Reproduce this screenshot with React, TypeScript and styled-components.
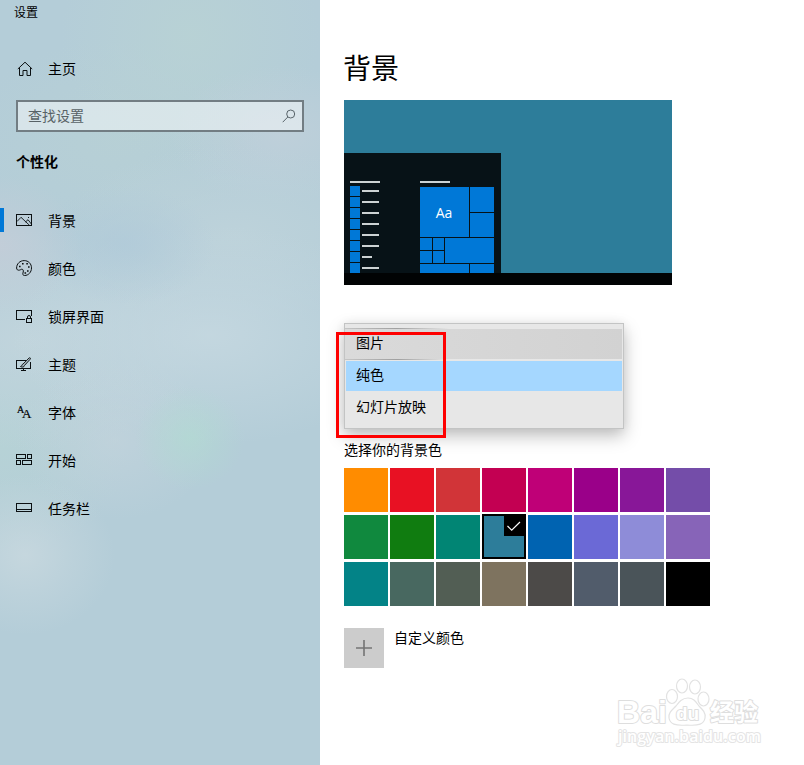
import React from "react";
import styled, { createGlobalStyle, css } from "styled-components";

const GlobalStyle = createGlobalStyle`
  *, *::before, *::after { box-sizing: border-box; }
  body {
    margin: 0;
    background: #fff;
    color: #000;
    font: 14px/20px "Noto Sans CJK SC", "Noto Sans", sans-serif;
    overflow: hidden;
  }
  svg { display: block; }
`;

const Window = styled.div`
  position: relative;
  display: flex;
  width: 804px;
  height: 765px;
  overflow: hidden;
`;

const Sidebar = styled.aside`
  width: 320px;
  flex: none;
  display: flex;
  flex-direction: column;
  background:
    radial-gradient(ellipse 55px 52px at 190px 438px, rgba(178, 219, 210, 0.7), rgba(178, 219, 210, 0.35) 50%, transparent),
    radial-gradient(ellipse 90px 80px at 25px 555px, rgba(203, 218, 224, 0.75), rgba(203, 218, 224, 0.35) 50%, transparent),
    radial-gradient(ellipse 100px 80px at 115px 440px, rgba(200, 214, 222, 0.55), transparent),
    radial-gradient(ellipse 80px 70px at 0 245px, rgba(198, 205, 216, 0.75), transparent),
    radial-gradient(ellipse 90px 60px at 125px 245px, rgba(176, 202, 217, 0.75), transparent),
    radial-gradient(ellipse 200px 110px at 210px 335px, rgba(199, 217, 225, 0.8), transparent),
    radial-gradient(ellipse 180px 90px at 235px 235px, rgba(192, 212, 219, 0.75), transparent),
    radial-gradient(ellipse 180px 110px at 30px 340px, rgba(197, 215, 222, 0.75), transparent),
    radial-gradient(ellipse 110px 70px at 280px 135px, rgba(197, 209, 219, 0.6), transparent),
    radial-gradient(ellipse 130px 130px at 190px 35px, rgba(185, 211, 212, 0.75), transparent),
    radial-gradient(ellipse 150px 100px at 115px 140px, rgba(184, 209, 212, 0.65), transparent),
    radial-gradient(ellipse 130px 110px at 0 445px, rgba(183, 212, 213, 0.7), transparent),
    #b4cdd8;
`;

const WindowTitle = styled.div`
  height: 45px;
  padding: 3px 14px;
  font-size: 12px;
  line-height: 18px;
`;

const HomeLink = styled.div`
  height: 48px;
  padding-left: 17px;
  display: flex;
  align-items: center;
  gap: 15px;
`;

const HomeLabel = styled.span`
  padding-bottom: 2px;
`;

const SearchBox = styled.div`
  height: 32px;
  margin: 7px 16px 0;
  padding: 0 6px 0 10px;
  border: 2px solid #727d83;
  background: rgba(255, 255, 255, 0.46);
  display: flex;
  align-items: center;
  justify-content: space-between;
  color: #586266;
`;

const Placeholder = styled.span`
  padding-bottom: 3px;
`;

const SectionTitle = styled.div`
  height: 64px;
  padding: 19px 16px 0;
  font-weight: 700;
`;

const NavItem = styled.div<{ $active?: boolean }>`
  height: 48px;
  display: flex;
  align-items: center;
  gap: 16px;
  padding-left: 12px;
  border-left: 4px solid transparent;
  ${(p) =>
    p.$active &&
    css`
      border-image: linear-gradient(transparent 12px, #0078d7 12px, #0078d7 36px, transparent 36px) 0 0 0 4;
    `}
`;

const NavIcon = styled.svg`
  width: 16px;
  height: 16px;
  fill: none;
  stroke: #0b1012;
  overflow: visible;
`;

const IconLetter = styled.text<{ $size: number }>`
  font: ${(p) => p.$size}px "Liberation Serif", serif;
  fill: #000;
  stroke: #000;
  stroke-width: 0.2;
`;

const NavLabel = styled.span`
  padding-bottom: 1px;
`;

const Main = styled.main`
  flex: 1;
  padding: 47px 24px 0;
  display: flex;
  flex-direction: column;
  align-items: flex-start;
`;

const Heading = styled.h1`
  margin: 0 0 13px -1px;
  font-size: 28px;
  line-height: 40px;
  font-weight: 400;
`;

const Preview = styled.div`
  width: 328px;
  height: 185px;
  display: flex;
  flex-direction: column;
  justify-content: flex-end;
  background: #2d7d9a;
`;

const StartMenu = styled.div`
  width: 157px;
  height: 120px;
  padding: 28px 7px 0 6px;
  display: flex;
  justify-content: space-between;
  background: #071217;
  overflow: hidden;
`;

const Taskbar = styled.div`
  height: 12px;
  background: #010304;
`;

const Bar = styled.div<{ $w: number }>`
  width: ${(p) => p.$w}px;
  height: 2px;
  background: #ccd2d3;
`;

const AppList = styled.div`
  display: flex;
  flex-direction: column;
  gap: 1px;
  & > ${Bar} { margin-bottom: 2px; }
`;

const AppEntry = styled.div`
  height: 10px;
  display: flex;
  gap: 2px;
  align-items: flex-start;
  ${Bar} { margin-top: 4px; }
`;

const AppTile = styled.div`
  width: 10px;
  height: 10px;
  background: #0078d7;
`;

const TileArea = styled.div`
  width: 74px;
`;

const TileGrid = styled.div`
  margin-top: 4px;
  display: grid;
  grid-template-columns: 12px 11px 24px 24px;
  grid-template-rows: 25px 24px 12px 12px 9px;
  gap: 1px;
`;

const Tile = styled.div<{ $area: string }>`
  grid-area: ${(p) => p.$area};
  background: #0078d7;
  color: #fff;
  display: flex;
  align-items: center;
  justify-content: center;
  font: 14px/20px "Open Sans", sans-serif;
  padding: 1px 1px 0 0;
`;

const SelectArea = styled.div`
  position: relative;
  margin-top: 38px;
  height: 106px;
`;

const Menu = styled.div`
  width: 280px;
  height: 106px;
  padding: 5px 1px;
  display: flex;
  flex-direction: column;
  gap: 2px;
  border: 1px solid #c3c4c4;
  background: #e7e7e7;
  box-shadow: 0 7px 16px rgba(0, 0, 0, 0.25), 0 0 10px rgba(0, 0, 0, 0.06);
`;

const MenuItem = styled.div<{ $state?: "hover" | "selected" }>`
  height: 30px;
  padding-left: 10px;
  line-height: 26px;
  ${(p) =>
    p.$state === "hover" &&
    css`
      background: linear-gradient(90deg, #dadada, #d2d2d2);
      box-shadow: -1px 0 #dadada;
      &::before, &::after {
        content: "";
        display: block;
        width: 104px;
        height: 1px;
        margin: -1px 0 0 -11px;
        background: linear-gradient(90deg, #c5c5c5, #a0a0a0 50%, transparent);
      }
      &::after { margin-top: 4px; }
    `}
  ${(p) => p.$state === "selected" && css`background: #a5d7ff;`}
`;

const Highlight = styled.div`
  position: absolute;
  left: -8px;
  top: 9px;
  width: 110px;
  height: 106px;
  border: 3px solid #fe0000;
`;

const FieldLabel = styled.div`
  position: relative;
  margin: 10px 0 9px;
`;

const Palette = styled.div`
  display: grid;
  grid-template-columns: repeat(8, 44px);
  grid-auto-rows: 44px;
  gap: 3px 2px;
`;

const Swatch = styled.div<{ $color: string; $selected?: boolean }>`
  background: ${(p) => p.$color};
  ${(p) =>
    p.$selected &&
    css`
      margin-top: -1px;
      border: 2px solid #000;
      display: flex;
      justify-content: flex-end;
      align-items: flex-start;
    `}
`;

const CheckBadge = styled.svg`
  width: 20px;
  height: 20px;
  background: #000;
  fill: none;
  stroke: #fff;
  stroke-width: 1.2;
`;

const CustomColor = styled.div`
  margin-top: 22px;
  display: flex;
  gap: 10px;
`;

const AddButton = styled.div`
  width: 40px;
  height: 40px;
  background: #ccc;
  svg { stroke: #747474; stroke-width: 1.6; }
`;

const CustomLabel = styled.span`
  line-height: 18px;
`;

const Watermark = styled.svg`
  position: absolute;
  left: 610px;
  top: 672px;
  fill: #fff;
  stroke: #e2e2e2;
  stroke-width: 1.2;
`;

const WatermarkText = styled.text<{ $size: number }>`
  font: 700 ${(p) => p.$size}px "Liberation Sans", "Noto Sans CJK SC", sans-serif;
  paint-order: stroke;
  stroke: #dedede;
  stroke-width: 2;
  stroke-linejoin: round;
`;

const WatermarkUrl = styled(WatermarkText)`
  font-family: "Open Sans", sans-serif;
  font-weight: 600;
  stroke: #e4e4e4;
`;

const icons = {
  picture: (
    <NavIcon viewBox="0 0 16 16">
      <path d="M.5 2.500h15v11H.5z" shapeRendering="crispEdges" />
      <path d="M1 9.500l4-4.200 8.500 8M9.500 10l2.500-2.300 3.500 4.500" strokeWidth="0.9" />
      <path d="M12 5.500h1" />
    </NavIcon>
  ),
  palette: (
    <NavIcon viewBox="0 0 16 16">
      <path d="M.6 8C.6 3.8 3.9.6 8.2.6c4.100 0 7.300 3.100 7.300 7.300 0 4.300-3.100 7.600-6.900 7.600-1.500 0-2.100-1-1.700-2.300.5-1.600.8-3.100-.3-3.800-1-.7-1.700.4-3 .7C1.700 10.500.6 9.700.6 8z" />
      <path d="M3 6.500h1.600M6 3.800h1.600M10.300 3.800h1.600M12 7h1.600M11 11h1.600M8.500 13h1.600" strokeWidth="1.600" />
    </NavIcon>
  ),
  lock: (
    <NavIcon viewBox="0 0 16 16">
      <path d="M9 11.500H.5v-9h15v5" shapeRendering="crispEdges" />
      <path d="M10.500 10.500h5v4h-5z" shapeRendering="crispEdges" />
      <path d="M11.500 10.500V9a1.500 1.500 0 013 0v1.500" />
    </NavIcon>
  ),
  theme: (
    <NavIcon viewBox="0 0 16 16">
      <path d="M9.500 4.500H.5v8h14v-6.500M7.500 12.500v2M5 14.500h5" shapeRendering="crispEdges" />
      <path d="M4.500 10.500c1.500 0 1-2 2.500-2.500l6-6c1-.8 2 .3 1.200 1.200L8.500 9.500c-.3 1.800-2.500 2-4 1z" fill="#a3b3ba" strokeWidth="0.900" />
    </NavIcon>
  ),
  fonts: (
    <NavIcon viewBox="0 0 16 16">
      <IconLetter x="1" y="9" $size={10}>A</IconLetter>
      <IconLetter x="6" y="13.500" $size={13}>A</IconLetter>
    </NavIcon>
  ),
  start: (
    <NavIcon viewBox="0 0 16 16" shapeRendering="crispEdges">
      <path d="M.5 2.500h9v4h-9zM11.500 2.500h4v4h-4zM.5 8.500h4v4h-4zM6.500 8.500h9v4h-9z" />
    </NavIcon>
  ),
  taskbar: (
    <NavIcon viewBox="0 0 16 16" shapeRendering="crispEdges">
      <path d="M.5 3.500h15v8H.5zM.5 9.500h15" />
    </NavIcon>
  ),
};

const navItems = [
  { label: "背景", icon: icons.picture, active: true },
  { label: "颜色", icon: icons.palette },
  { label: "锁屏界面", icon: icons.lock },
  { label: "主题", icon: icons.theme },
  { label: "字体", icon: icons.fonts },
  { label: "开始", icon: icons.start },
  { label: "任务栏", icon: icons.taskbar },
];

const colors = [
  "#ff8c00", "#e81123", "#d13438", "#c30052", "#bf0077", "#9a0089", "#881798", "#744da9",
  "#10893e", "#107c10", "#018574", "#2d7d9a", "#0063b1", "#6b69d6", "#8e8cd8", "#8764b8",
  "#038387", "#486860", "#525e54", "#7e735f", "#4c4a48", "#515c6b", "#4a5459", "#000000",
];

const tiles = ["1 / 1 / 3 / 4", "1 / 4", "2 / 4", "3 / 1", "3 / 2", "4 / 1", "4 / 2", "3 / 3 / 5 / 5", "5 / 1 / 6 / 4", "5 / 4"];

export default function App() {
  return (
    <Window>
      <GlobalStyle />
      <Sidebar>
        <WindowTitle>设置</WindowTitle>
        <HomeLink>
          <NavIcon viewBox="0 0 16 16">
            <path d="M.8 8L8 1.200 15.200 8M2.500 6.800v7.700h3.500v-5h4v5h3.500V6.800" />
          </NavIcon>
          <HomeLabel>主页</HomeLabel>
        </HomeLink>
        <SearchBox>
          <Placeholder>查找设置</Placeholder>
          <svg width="14" height="14" viewBox="0 0 14 14" fill="none" stroke="#59646a">
            <circle cx="8.700" cy="5" r="4" />
            <path d="M5.800 8L.7 13.200" />
          </svg>
        </SearchBox>
        <SectionTitle>个性化</SectionTitle>
        {navItems.map((item) => (
          <NavItem key={item.label} $active={item.active}>
            {item.icon}
            <NavLabel>{item.label}</NavLabel>
          </NavItem>
        ))}
      </Sidebar>
      <Main>
        <Heading>背景</Heading>
        <Preview>
          <StartMenu>
            <AppList>
              <Bar $w={30} />
              {[17, 17, 17, 17, 17, 17, 10, 17].map((w, i) => (
                <AppEntry key={i}>
                  <AppTile />
                  <Bar $w={w} />
                </AppEntry>
              ))}
            </AppList>
            <TileArea>
              <Bar $w={30} />
              <TileGrid>
                {tiles.map((area, i) => (
                  <Tile key={area} $area={area}>{i === 0 ? "Aa" : null}</Tile>
                ))}
              </TileGrid>
            </TileArea>
          </StartMenu>
          <Taskbar />
        </Preview>
        <SelectArea>
          <Menu>
            <MenuItem $state="hover">图片</MenuItem>
            <MenuItem $state="selected">纯色</MenuItem>
            <MenuItem>幻灯片放映</MenuItem>
          </Menu>
          <Highlight />
        </SelectArea>
        <FieldLabel>选择你的背景色</FieldLabel>
        <Palette>
          {colors.map((color) => (
            <Swatch key={color} $color={color} $selected={color === "#2d7d9a"}>
              {color === "#2d7d9a" && (
                <CheckBadge viewBox="0 0 20 20">
                  <path d="M3.500 10l4.200 4.200L16 6" />
                </CheckBadge>
              )}
            </Swatch>
          ))}
        </Palette>
        <CustomColor>
          <AddButton>
            <svg width="40" height="40">
              <path d="M12 20h16M20 12v16" />
            </svg>
          </AddButton>
          <CustomLabel>自定义颜色</CustomLabel>
        </CustomColor>
      </Main>
      <Watermark width="160" height="86" viewBox="0 0 160 86">
        <WatermarkText x="7" y="51" $size={32} textLength="50">Bai</WatermarkText>
        <ellipse cx="62" cy="24.500" rx="5.500" ry="7" />
        <ellipse cx="72" cy="14" rx="5.500" ry="7" />
        <ellipse cx="85" cy="15" rx="5.500" ry="7" />
        <ellipse cx="93.500" cy="27" rx="5.500" ry="7" />
        <path d="M78 26c6 0 8 4 11 8 4 4 7 7 6 12-1 6-6 8-18 7-12 1-17-1-18-7-1-5 3-8 7-12 3-4 6-8 12-8z" />
        <WatermarkText x="66" y="48" $size={19} textLength="23">du</WatermarkText>
        <WatermarkText x="100" y="49" $size={24} textLength="48">经验</WatermarkText>
        <WatermarkUrl x="8" y="70" $size={16} textLength="143">jingyan.baidu.com</WatermarkUrl>
      </Watermark>
    </Window>
  );
}
